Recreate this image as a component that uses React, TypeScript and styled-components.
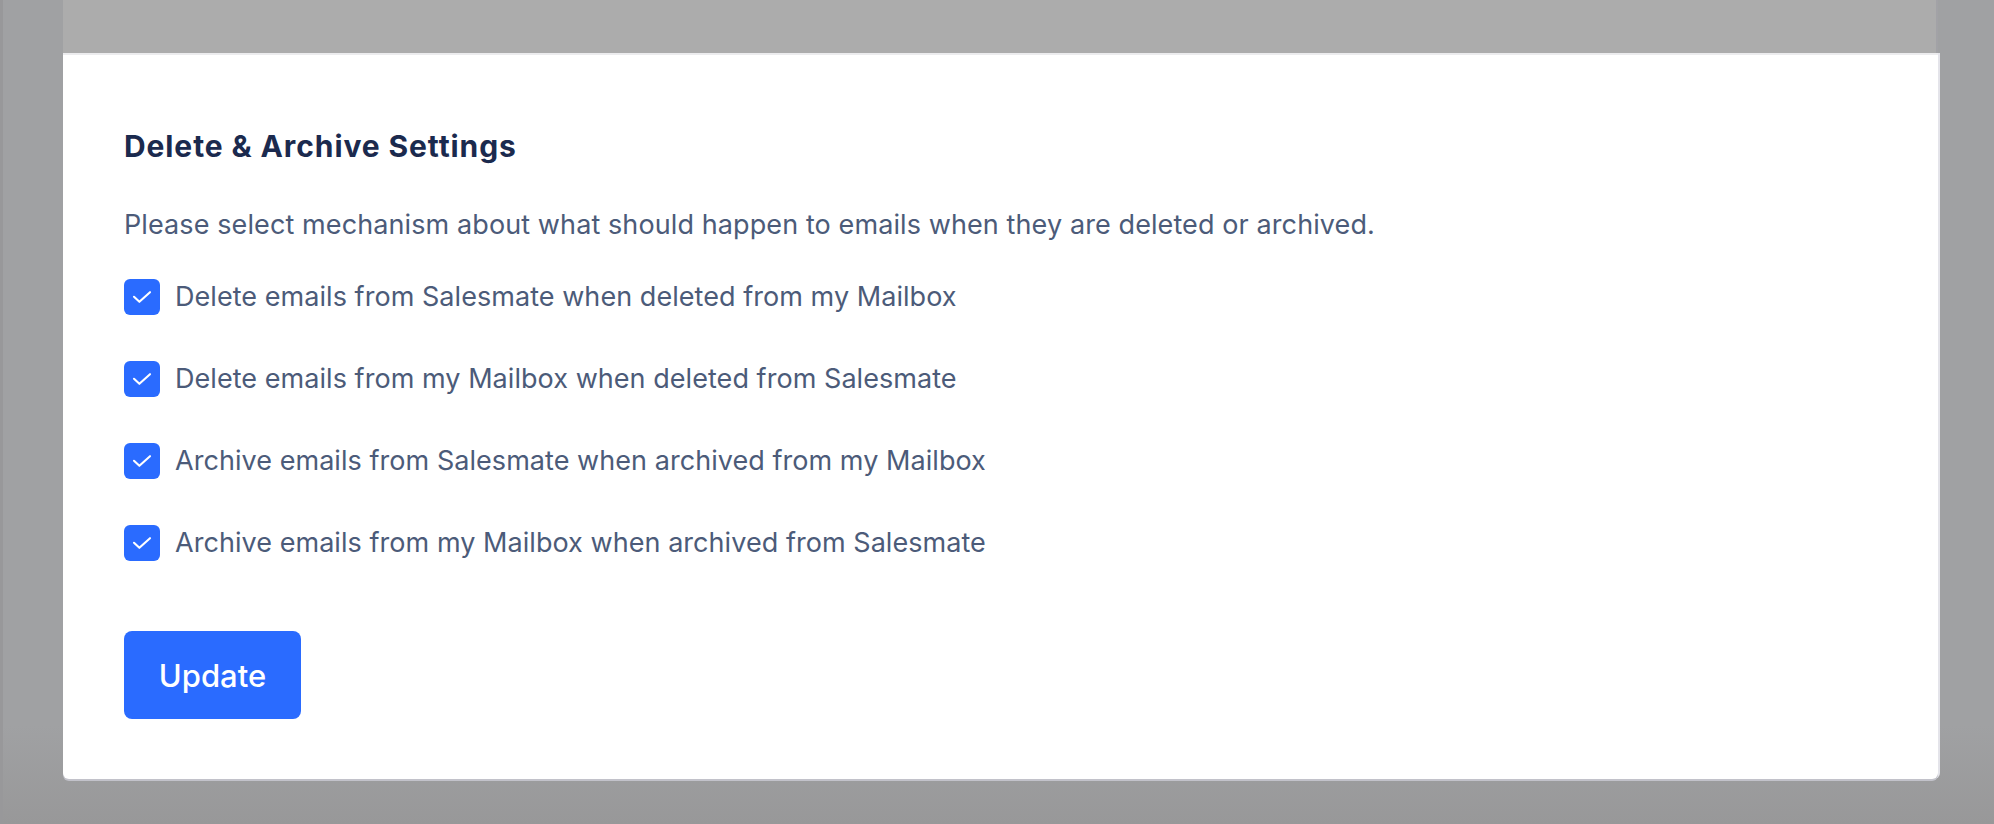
import styled, { createGlobalStyle } from "styled-components";

const GlobalStyle = createGlobalStyle`
	html, body {
		margin: 0;
		padding: 0;
		background: #a0a1a3;
		font-family: Inter, "Noto Sans", sans-serif;
	}
`;

const Page = styled.div`
	display: flex;
	width: 1994px;
	height: 824px;
	overflow: hidden;
	background: linear-gradient(180deg, #a0a1a3 0%, #a0a1a3 88%, #989899 100%);
	border-left: 3px solid #98989a;
	box-sizing: border-box;
`;

const Main = styled.div`
	display: flex;
	flex-direction: column;
	margin-left: 60px;
	width: 1875px;
`;

const TopBar = styled.div`
	height: 53px;
	background: #acacac;
	border-right: 2px solid #a2a2a6;
`;

const Panel = styled.section`
	background: #ffffff;
	height: 726px;
	box-sizing: border-box;
	border-top: 2px solid #ececee;
	border-radius: 0 0 6px 6px;
	box-shadow: 0 2px 0 #c2c2ca, 2px 0 0 #e4e4ea;
	padding: 74px 61px 0;
	display: flex;
	flex-direction: column;
	align-items: flex-start;
`;

const Title = styled.h2`
	margin: 0;
	font-size: 30px;
	line-height: 34px;
	font-weight: 700;
	letter-spacing: 0.9px;
	color: #1b2a4e;
`;

const Description = styled.p`
	margin: 46px 0 0;
	font-size: 27px;
	line-height: 32px;
	letter-spacing: 0.1px;
	color: #4c5b79;
`;

const OptionList = styled.ul`
	list-style: none;
	margin: 38px 0 0;
	padding: 0;
	display: flex;
	flex-direction: column;
	gap: 46px;
`;

const Option = styled.li`
	display: flex;
	align-items: center;
	gap: 15px;
	font-size: 27px;
	line-height: 36px;
	letter-spacing: 0.05px;
	color: #4c5b79;
`;

const Box = styled.span<{ $checked: boolean }>`
	width: 36px;
	height: 36px;
	flex-shrink: 0;
	border-radius: 6px;
	display: flex;
	align-items: center;
	justify-content: center;
	background: ${(p) => (p.$checked ? "#2a6bff" : "#ffffff")};
	border: ${(p) => (p.$checked ? "none" : "2px solid #c4cbd8")};
	box-sizing: border-box;
`;

const UpdateButton = styled.button`
	margin-top: 70px;
	width: 177px;
	height: 88px;
	border: none;
	border-radius: 8px;
	background: #2a6bff;
	color: #ffffff;
	font-family: Inter, "Noto Sans", sans-serif;
	font-size: 31px;
	font-weight: 500;
	cursor: pointer;
`;

const options = [
	"Delete emails from Salesmate when deleted from my Mailbox",
	"Delete emails from my Mailbox when deleted from Salesmate",
	"Archive emails from Salesmate when archived from my Mailbox",
	"Archive emails from my Mailbox when archived from Salesmate",
];

const Check = () => (
	<svg width="20" height="14" viewBox="0 0 20 14" fill="none">
		<path d="M2 6.8 L7.4 11.8 L18 2.2" stroke="#fff" strokeWidth="2.1" strokeLinecap="round" strokeLinejoin="round" />
	</svg>
);

export default function App() {
	return (
		<>
			<GlobalStyle />
			<Page>
				<Main>
					<TopBar />
					<Panel>
						<Title>Delete &amp; Archive Settings</Title>
						<Description>
							Please select mechanism about what should happen to emails when they are deleted or archived.
						</Description>
						<OptionList>
							{options.map((label) => (
								<Option key={label}>
									<Box $checked>
										<Check />
									</Box>
									{label}
								</Option>
							))}
						</OptionList>
						<UpdateButton>Update</UpdateButton>
					</Panel>
				</Main>
			</Page>
		</>
	);
}
